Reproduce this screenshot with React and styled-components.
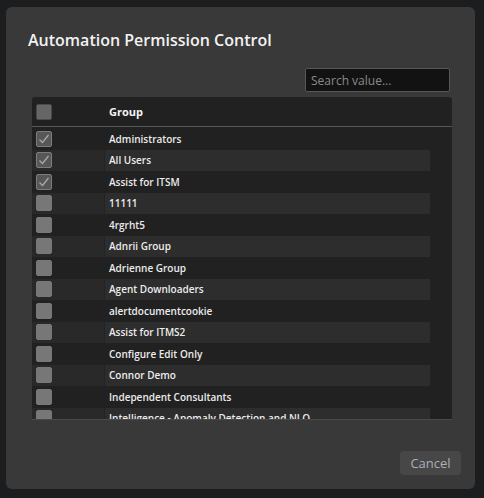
import React from "react";
import styled, { createGlobalStyle } from "styled-components";

const GlobalStyle = createGlobalStyle`
  html, body {
    margin: 0;
    padding: 0;
    background: #1c1d1f;
    font-family: "Open Sans", "Liberation Sans", sans-serif;
  }
`;

const Page = styled.div`
  width: 484px;
  height: 498px;
  padding: 7px 0 0 6px;
  box-sizing: border-box;
`;

const Modal = styled.div`
  width: 469px;
  height: 482px;
  box-sizing: border-box;
  background: #393939;
  border-radius: 6px;
  padding: 22px 23px 0 22px;
  display: flex;
  flex-direction: column;
`;

const Title = styled.h2`
  margin: 0;
  height: 22px;
  line-height: 22px;
  font-size: 16px;
  font-weight: 600;
  color: #f2f2f2;
`;

const SearchRow = styled.div`
  display: flex;
  justify-content: flex-end;
  margin-top: 17px;
  padding-right: 2px;
`;

const Search = styled.input`
  width: 145px;
  height: 24px;
  box-sizing: border-box;
  background: #121212;
  border: 1px solid #575757;
  border-radius: 2px;
  padding: 0 5px;
  font-family: "Open Sans", sans-serif;
  font-size: 12px;
  color: #ddd;
  outline: none;

  &::placeholder {
    color: #8a8a8a;
  }
`;

const Table = styled.div`
  margin: 5px 0 0 4px;
  width: 420px;
  height: 323px;
  background: #212121;
  border-radius: 3px 3px 0 0;
  border-bottom: 1px solid #4a4a4a;
  box-sizing: border-box;
  overflow: hidden;
  display: flex;
  flex-direction: column;
`;

const Header = styled.div`
  height: 30px;
  flex: none;
  display: flex;
  align-items: center;
  border-bottom: 1px solid #585858;
  box-sizing: border-box;
`;

const Body = styled.div`
  flex: 1;
  overflow: hidden;
  padding-top: 1px;
  padding-right: 22px;
`;

const Row = styled.div`
  height: 21.5px;
  display: flex;
  align-items: center;
  background: ${(p) => (p.$striped ? "#2d2d2d" : "transparent")};
`;

const CheckCell = styled.div`
  width: 72px;
  height: 100%;
  flex: none;
  display: flex;
  align-items: center;
  padding-left: 4px;
  box-sizing: border-box;
  background: ${(p) => (p.$striped ? "#292929" : "transparent")};
`;

const NameCell = styled.div`
  flex: 1;
  height: 100%;
  display: flex;
  align-items: center;
  padding-left: 4px;
  border-left: 1px solid ${(p) => (p.$striped ? "#232323" : "transparent")};
  font-size: 10px;
  font-weight: 600;
  color: #ececec;
  white-space: nowrap;
`;

const HeaderLabel = styled.div`
  padding-left: 5px;
  font-size: 11px;
  font-weight: 700;
  color: #f4f4f4;
`;

const Box = styled.div`
  width: 16px;
  height: 16px;
  box-sizing: border-box;
  border-radius: 2px;
  background: ${(p) => (p.$checked ? "#575757" : p.$head ? "#666" : "#777")};
  border: 1px solid ${(p) => (p.$checked ? "#7c7c7c" : p.$head ? "#4a4a4a" : "#777")};
  display: flex;
  align-items: center;
  justify-content: center;
`;

const Footer = styled.div`
  margin-top: auto;
  display: flex;
  justify-content: flex-end;
  padding: 0 0 14px 0;
  margin-right: -9px;
`;

const Cancel = styled.button`
  width: 61px;
  height: 24px;
  border: none;
  border-radius: 4px;
  background: #474747;
  color: #a9b0b8;
  font-family: "Open Sans", sans-serif;
  font-size: 13px;
  padding: 0;
`;

const groups = [
  ["Administrators", true],
  ["All Users", true],
  ["Assist for ITSM", true],
  ["11111", false],
  ["4rgrht5", false],
  ["Adnrii Group", false],
  ["Adrienne Group", false],
  ["Agent Downloaders", false],
  ["alertdocumentcookie", false],
  ["Assist for ITMS2", false],
  ["Configure Edit Only", false],
  ["Connor Demo", false],
  ["Independent Consultants", false],
  ["Intelligence - Anomaly Detection and NLQ", false],
];

const Check = () => (
  <svg width="14" height="14" viewBox="0 0 14 14">
    <path d="M2.5 7.5 L5.5 10.5 L11.5 3" fill="none" stroke="#a8a8a8" strokeWidth="1.3" />
  </svg>
);

const App = () => (
  <Page>
    <GlobalStyle />
    <Modal>
      <Title>Automation Permission Control</Title>
      <SearchRow>
        <Search placeholder="Search value..." />
      </SearchRow>
      <Table>
        <Header>
          <CheckCell>
            <Box $head />
          </CheckCell>
          <HeaderLabel>Group</HeaderLabel>
        </Header>
        <Body>
          {groups.map(([name, checked], i) => (
            <Row key={name} $striped={i % 2 === 1}>
              <CheckCell $striped={i % 2 === 1}>
                <Box $checked={checked}>{checked && <Check />}</Box>
              </CheckCell>
              <NameCell $striped={i % 2 === 1}>{name}</NameCell>
            </Row>
          ))}
        </Body>
      </Table>
      <Footer>
        <Cancel>Cancel</Cancel>
      </Footer>
    </Modal>
  </Page>
);

export default App;
